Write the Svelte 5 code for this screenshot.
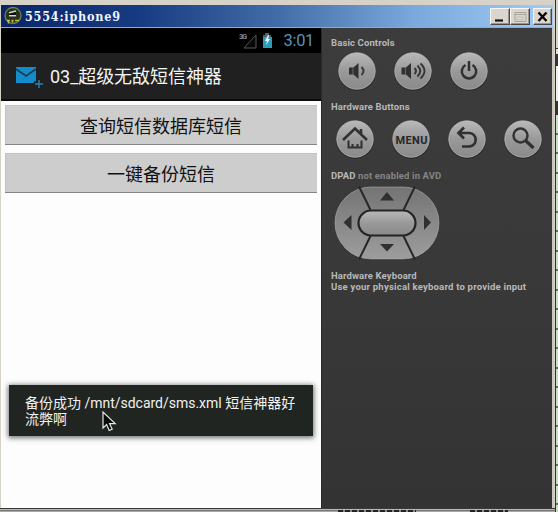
<script>
  const ticks = Array.from({ length: 20 }, (_, i) => i);
</script>

{#snippet disc()}
  <circle cx="20" cy="20.5" r="19.2" fill="#242424" />
  <circle cx="20" cy="20" r="18.3" fill="url(#metal)" stroke="#bdbdbd" stroke-width=".7" />
{/snippet}

<div class="desktop">
  <div class="window">
    <header class="titlebar">
      <svg class="appicon" width="18" height="18" viewBox="0 0 18 18">
        <circle cx="9" cy="8.5" r="8" fill="#27351f" stroke="#758149" stroke-width="1.3" />
        <path d="M5 4.500h7v5H5z" fill="#0b100d" />
        <path d="M5 5.800L12 4M5 8.800h7" stroke="#d3dbc8" stroke-width="1.4" />
        <path d="M3 13.500h3M7.500 13.500h2M11 13.500h4M4.500 13.500v3M8.500 13.500v2" stroke="#c4bd45" stroke-width="1.5" />
      </svg>
      <span class="title">5554:iphone9</span>
      <div class="wbtns">
        <span class="wb"><svg width="18" height="15"><path d="M4 11.5h8" stroke="#111" stroke-width="2.2" /></svg></span>
        <span class="wb"><svg width="18" height="15"><path d="M4 3.5h11v9H4zM4 5.5h11" fill="none" stroke="#aaa59b" /><path d="M6 8h6v3H6z" fill="none" stroke="#c2beb5" /></svg></span>
        <span class="wb close"><svg width="17" height="15"><path d="M4.5 3.5l8 8.5M12.5 3.5l-8 8.5" stroke="#080808" stroke-width="2.4" /></svg></span>
      </div>
    </header>

    <div class="body">
      <section class="phone">
        <div class="status">
          <svg width="36" height="24" viewBox="0 0 36 24">
            <text x="0" y="10" font-size="7.5" font-weight="bold" fill="#85898b" textLength="8">3G</text>
            <path d="M5 19L17 6v13z" fill="#070707" stroke="#55595b" stroke-width="1" />
            <path d="M24 6h2V4h4v2h2v3h-8z" fill="#526167" />
            <path d="M24 8h9v11h-9z" fill="#2b9dba" />
            <path d="M29 6l-3 6h2l-1 4 4-6h-2l1-4z" fill="#f2ffff" />
          </svg>
          <span class="clock">3:01</span>
        </div>
        <div class="actionbar">
          <svg width="29" height="25" viewBox="0 0 29 25">
            <path d="M1 3h20v16H1z" fill="#148bcb" />
            <path d="M1 5l10 7 10-7" fill="none" stroke="#1b3c50" stroke-width="1.7" />
            <path d="M19 19h9M24 15v9" stroke="#1c1c1c" stroke-width="3.5" />
            <path d="M20 20h8M24 16v8" stroke="#2b82b5" stroke-width="1.4" />
          </svg>
          <span>03_超级无敌短信神器</span>
        </div>
        <div class="content">
          <button>查询短信数据库短信</button>
          <button>一键备份短信</button>
          <div class="toast">备份成功 <span class="path">/mnt/sdcard/sms.xml</span> 短信神器好<br />流弊啊</div>
          <svg class="cursor" width="15" height="21" viewBox="0 0 15 21">
            <path d="M1 1v16l3.6-3.4 2.6 5.9 3-1.4-2.7-5.5h5.7z" fill="#080a09" stroke="#e4e7e5" stroke-width="1.2" />
          </svg>
        </div>
      </section>

      <section class="panel">
        <svg class="defs" width="0" height="0">
          <defs>
            <linearGradient id="metal" x1="0" y1="0" x2="0" y2="1">
              <stop offset="0" stop-color="#b9b9b9" />
              <stop offset=".5" stop-color="#999" />
              <stop offset="1" stop-color="#8a8a8a" />
            </linearGradient>
            <linearGradient id="pad" x1="0" y1="0" x2="0" y2="1">
              <stop offset="0" stop-color="#747474" />
              <stop offset="1" stop-color="#9d9d9d" />
            </linearGradient>
          </defs>
        </svg>
        <h2>Basic Controls</h2>
        <div class="row one">
          <svg width="40" height="41">{@render disc()}
            <path d="M12 16.500h4.500l5-4.500v16l-5-4.500H12z" fill="#303030" />
            <path d="M16 16.5v7" stroke="#777" stroke-width=".8" />
            <path d="M24.500 16q4 4 0 8" fill="none" stroke="#3b3b3b" stroke-width="2" />
          </svg>
          <svg width="40" height="41">{@render disc()}
            <path d="M8.500 16.500H13l5-4.500v16l-5-4.500H8.500z" fill="#303030" />
            <path d="M12.500 16.5v7" stroke="#777" stroke-width=".8" />
            <path d="M21.500 17q3 3 0 6M24.500 14.500q5.500 5.500 0 11M27.500 12.500q8 7.500 0 15" fill="none" stroke="#353535" stroke-width="1.9" />
          </svg>
          <svg width="40" height="41">{@render disc()}
            <path d="M16.500 14a7.200 7.200 0 1 0 7 0M20 10v10" fill="none" stroke="#303030" stroke-width="2.5" />
          </svg>
        </div>
        <h2 class="hw">Hardware Buttons</h2>
        <div class="row two">
          <svg width="40" height="41">{@render disc()}
            <path d="M8 21L20 9.500l12 11.500M26 14.500V10" fill="none" stroke="#303030" stroke-width="2.6" />
            <path d="M13.500 21.500v7h4V25M26.500 21.500v7h-4V25M17 28.500h6" fill="none" stroke="#303030" stroke-width="2" />
          </svg>
          <svg width="40" height="41">{@render disc()}
            <text x="4.5" y="25" font-size="11" font-weight="bold" fill="#272727" textLength="32">MENU</text>
          </svg>
          <svg width="40" height="41">{@render disc()}
            <path d="M17 8.500l-5.500 5.500 5.500 5.500M12 14H22.500a7 6.800 0 0 1 0 13.500H15" fill="none" stroke="#303030" stroke-width="2.7" />
          </svg>
          <svg width="40" height="41">{@render disc()}
            <circle cx="17.5" cy="16.5" r="7" fill="none" stroke="#343434" stroke-width="2.5" />
            <path d="M22.500 21.500l8 7.500" stroke="#303030" stroke-width="3.2" />
          </svg>
        </div>
        <h2 class="dp">DPAD <span>not enabled in AVD</span></h2>
        <svg class="dpad" width="108" height="76" viewBox="0 0 108 76">
          <rect x="1.5" y="1.5" width="105" height="73.5" rx="37" fill="#272727" />
          <rect x="2" y="2" width="104" height="72" rx="36" fill="url(#pad)" stroke="#aaa" stroke-width=".7" />
          <path d="M26 1.5L37.5 25M82 1.5L70.5 25M26 74.5L37.5 51M82 74.5L70.5 51" stroke="#272727" stroke-width="2" />
          <rect x="25.5" y="25.5" width="57" height="25" rx="12.5" fill="url(#metal)" stroke="#242424" stroke-width="2.2" />
          <path d="M54 7l7 8.5H47zM54 66.5l7-7.5H47zM10.500 37.500l8-7.500v15zM98 37.500L91 30v15z" fill="#303030" />
        </svg>
        <h2 class="kb">Hardware Keyboard</h2>
        <h2 class="kb2">Use your physical keyboard to provide input</h2>
      </section>
    </div>
    <div class="frame"><i class="a"></i><i class="b"></i></div>
  </div>
  <aside class="behind">
    <div class="behindtop"></div>
    {#each ticks as t (t)}<i></i>{/each}
  </aside>
</div>

<style>
  :global(body) { margin: 0; overflow: hidden; }
  .desktop {
    width: 558px; height: 512px; display: flex; position: relative; overflow: hidden;
    background: #d7d2c7; font-family: Roboto, "Noto Sans CJK SC", sans-serif;
  }
  .window {
    width: 556px; height: 512px; box-sizing: border-box; padding: 5px 0 0 1px;
    border-right: 1px solid #303030;
    background: linear-gradient(#d7d2c7 0 508px, #373737 508px 509px, #b9b9b9 509px 510px, #777 510px 511px, #a9a9a5 511px);
  }
  .titlebar {
    height: 23px; width: 552px; display: flex; align-items: center; box-sizing: border-box;
    padding: 0 1px 0 3px; border-bottom: 1px solid #8eabc9;
    background: linear-gradient(90deg, #092568, #173b82 25%, #426ca7 50%, #7ba9dc 75%, #a0cbf5);
  }
  .appicon { margin-right: 3px; flex: none; }
  .title {
    font: bold 12.5px/22px "DejaVu Serif Condensed", "DejaVu Serif", serif; font-stretch: condensed;
    color: #eef3fb; white-space: pre; letter-spacing: .78px; margin-top: 1px;
  }
  .wbtns { display: flex; margin-left: auto; }
  .wb {
    display: block; width: 20px; height: 17px; box-sizing: border-box; background: #dad6cd;
    border: 1px solid #f8f7f3; border-right-color: #48484a; border-bottom-color: #48484a;
    box-shadow: inset -1px -1px #98958d;
  }
  .wb svg { display: block; }
  .close { width: 19px; margin-left: 3px; }
  .body { display: flex; height: 480px; width: 554px; }
  .phone { width: 320px; display: flex; flex-direction: column; }
  .status {
    height: 25px; box-sizing: border-box; background: #000; display: flex;
    justify-content: flex-end; align-items: center; padding-right: 7px;
  }
  .status svg { margin-right: 9px; }
  .clock { color: #5b93b5; font-size: 16.5px; line-height: 24px; letter-spacing: -.35px; margin-top: 1px; }
  .actionbar {
    height: 48px; box-sizing: border-box; background: #202020; border-bottom: 2px solid #0a0a0a;
    display: flex; align-items: center; padding-left: 14px; color: #f4f4f4; font-size: 18px;
    line-height: 26px; white-space: pre;
  }
  .actionbar svg { margin: 0 6px 0 0; }
  .actionbar span { margin-top: 1px; letter-spacing: -.05px; }
  .content { flex: 1; background: #fdfdfd; position: relative; padding: 4px 4px 0; }
  button {
    display: block; width: 312px; height: 40px; padding: 3px 0 0; margin: 0 0 8px; border: 0;
    border-bottom: 1px solid #858585; background: #cdcdcd; color: #111;
    font: 18px/37px Roboto, "Noto Sans CJK SC", sans-serif;
    box-shadow: inset 1px 1px #c3c3c3;
  }
  .toast {
    position: absolute; left: 8px; top: 284px; width: 304px; height: 51px; box-sizing: border-box;
    padding: 10px 0 0 16px; background: #202522; color: #f0f2f0; font-size: 14px;
    line-height: 16px; white-space: nowrap; box-shadow: 0 1px 5px 1px #6d736f;
  }
  .path { letter-spacing: -.02px; }
  .cursor { position: absolute; left: 101px; top: 310px; }
  .panel {
    width: 233px; box-sizing: border-box; padding: 9px 0 0 9px; background: linear-gradient(#3c3c3c, #393939 50%, #333);
    border-left: 1px solid #2a2a2a; border-right: 2px solid #c8c6bd;
    display: flex; flex-direction: column; align-items: flex-start;
  }
  .defs { position: absolute; }
  h2 {
    margin: 0; font: bold 9.5px/11px Roboto, sans-serif; color: #b8b8b8; white-space: pre;
    letter-spacing: .12px;
  }
  .row { display: flex; gap: 16px; }
  .one { margin: 3px 0 0 6px; height: 41px; }
  .hw { margin-top: 9px; }
  .two { margin: 7px 0 0 4px; height: 41px; }
  .dp { margin-top: 10px; }
  .dp span { color: #858585; }
  .dpad { display: block; margin: 4px 0 0 2px; }
  .kb { margin-top: 9px; }
  .kb2 { letter-spacing: .215px; }
  .frame { display: flex; height: 4px; padding-left: 337px; align-items: flex-end; }
  .frame i { height: 2px; background: repeating-linear-gradient(90deg, #222 0 5px, #8b8b88 5px 7px); }
  .a { width: 78px; margin-right: 54px; }
  .b { width: 38px; }
  .behind { width: 2px; background: #c7dfc7; display: flex; flex-direction: column; }
  .behindtop {
    height: 115px; flex: none;
    background: linear-gradient(#d7d2c7 48px, #333 48px 49px, #e5e2cf 49px 54px, #333 54px 66px, #eee 66px 101px, #333 101px);
  }
  .behind i { height: 19.5px; flex: none; box-sizing: border-box; border-bottom: 2px solid #58705b; }
</style>
